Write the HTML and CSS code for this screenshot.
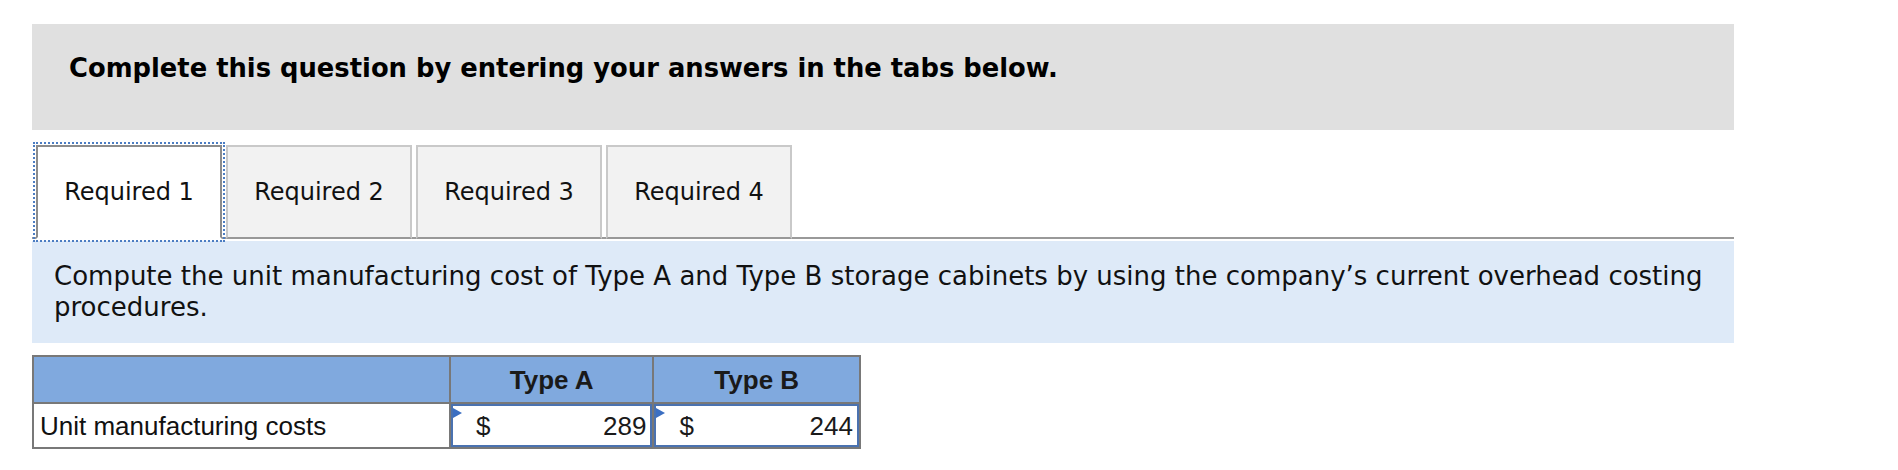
FILE: index.html
```html
<!DOCTYPE html>
<html lang="en">
<head>
<meta charset="utf-8">
<title>Required 1</title>
<link rel="stylesheet" href="styles.css">
</head>
<body>
<div class="page">
  <div class="banner">
    <h2 class="banner-title">Complete this question by entering your answers in the tabs below.</h2>
  </div>
  <div class="tabs">
    <div class="tab active">Required 1</div>
    <div class="tab">Required 2</div>
    <div class="tab">Required 3</div>
    <div class="tab">Required 4</div>
  </div>
  <div class="prompt">Compute the unit manufacturing cost of Type A and Type B storage cabinets by using the company’s current overhead costing procedures.</div>
  <table class="grid">
    <tr class="head">
      <th class="col-label"></th>
      <th class="col-a">Type A</th>
      <th class="col-b">Type B</th>
    </tr>
    <tr class="row">
      <td class="label">Unit manufacturing costs</td>
      <td class="entry"><div class="field"><span class="flag"></span><span class="cur">$</span><span class="num">289</span></div></td>
      <td class="entry"><div class="field"><span class="flag"></span><span class="cur">$</span><span class="num">244</span></div></td>
    </tr>
  </table>
  <div class="nav">
    <div class="nav-btn prev"></div>
    <div class="nav-btn next"></div>
  </div>
</div>
</body>
</html>
```
FILE: styles.css
```css
html, body {
  margin: 0;
  padding: 0;
  background: #fff;
  height: 470px;
  overflow: hidden;
}

.page {
  width: 1702px;
  height: 446px;
  margin: 24px 0 0 32px;
  overflow: hidden;
  font-family: "DejaVu Sans", Verdana, sans-serif;
  color: #111;
}

.banner {
  height: 106px;
  box-sizing: border-box;
  background: #e0e0e0;
  padding: 29px 0 0 37px;
}

.banner-title {
  margin: 0;
  font-size: 25.8px;
  line-height: 30px;
  font-weight: bold;
  color: #000;
}

.tabs {
  display: flex;
  gap: 4px;
  margin-top: 15px;
  padding-left: 4px;
  height: 94px;
  box-shadow: inset 0 -2px 0 #999;
}

.tab {
  width: 186px;
  box-sizing: border-box;
  border: 2px solid #c9c9c9;
  border-bottom-color: #999;
  background: #f2f2f2;
  display: flex;
  align-items: center;
  justify-content: center;
  font-size: 24px;
  color: #111;
}

.tab.active {
  background: #fff;
  border-color: #8c8c8c;
  border-bottom-color: #fff;
  outline: 2px dotted #4c7dc2;
  outline-offset: 1px;
}

.prompt {
  margin-top: 2px;
  height: 102px;
  box-sizing: border-box;
  background: #deeaf8;
  padding: 20px 22px 0 22px;
  font-size: 26px;
  line-height: 31px;
  color: #111;
}

.grid {
  margin-top: 12px;
  border-collapse: collapse;
  width: 829px;
  font-family: "Liberation Sans", Arial, sans-serif;
  color: #1a1a1a;
}

.grid th,
.grid td {
  border: 2px solid #787878;
  padding: 0;
}

.head th {
  height: 45px;
  background: #80a9de;
  font-size: 26px;
  line-height: 30px;
  font-weight: bold;
  text-align: center;
  vertical-align: middle;
}

.col-label { width: 416px; }
.col-a { width: 202px; }
.col-b { width: 205px; }

.row td {
  height: 43px;
  font-size: 26px;
  line-height: 30px;
}

.label {
  padding-left: 6px !important;
  color: #111;
  vertical-align: middle;
}

.entry {
  vertical-align: top;
}

.field {
  position: relative;
  height: 43px;
  box-sizing: border-box;
  border: 2px solid #4a72b0;
  background: #fff;
  display: flex;
  align-items: center;
  justify-content: space-between;
  padding: 0 4px 0 23px;
}

.flag {
  position: absolute;
  left: 0;
  top: 2px;
  width: 0;
  height: 0;
  border-left: 9px solid #3b6fc2;
  border-top: 5px solid transparent;
  border-bottom: 5px solid transparent;
}

.nav {
  display: flex;
  gap: 43px;
  margin-top: 21px;
  padding-left: 486px;
}

.nav-btn {
  width: 327px;
  height: 44px;
  box-sizing: border-box;
  border-radius: 2px;
}

.prev {
  background: #f4f7fa;
  border: 2px solid #dbe3eb;
}

.next {
  background: #4a6fa6;
  border: 2px solid #46699e;
}
```
